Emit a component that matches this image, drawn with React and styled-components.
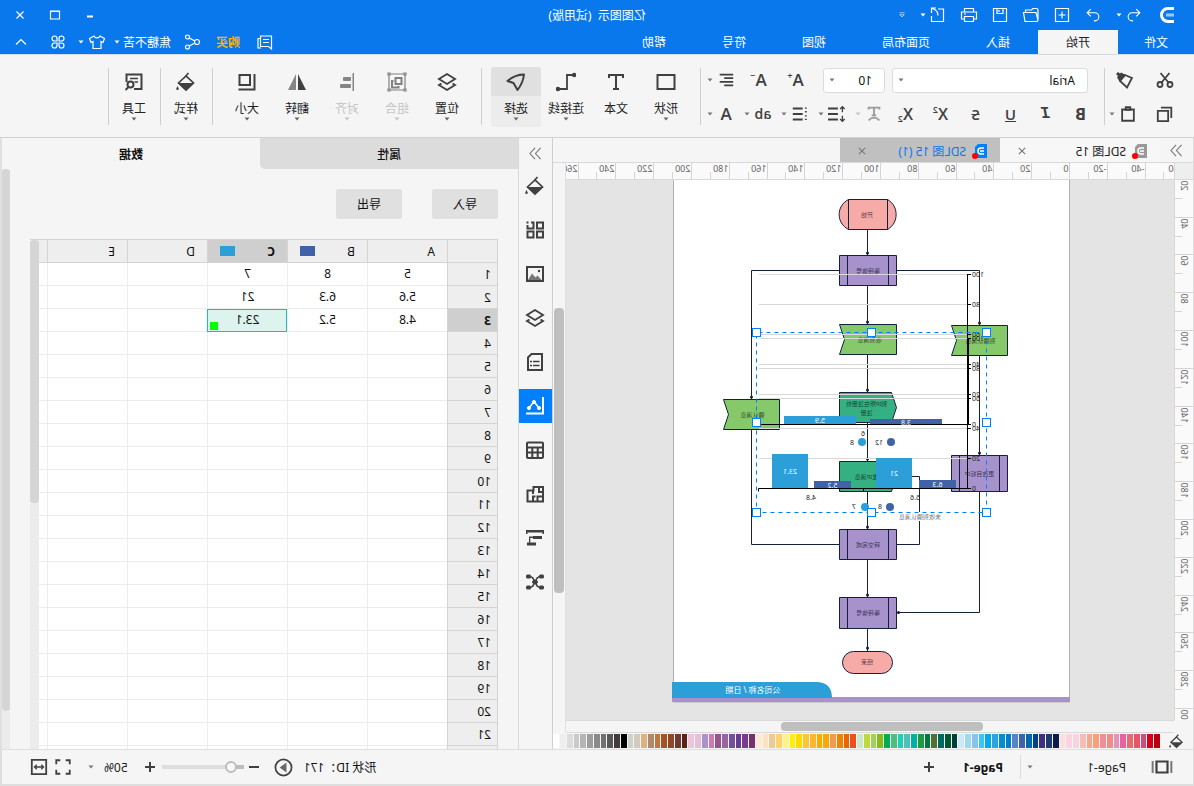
import React from "react";
import styled, { createGlobalStyle, css } from "styled-components";

const GlobalStyle = createGlobalStyle`
  * { box-sizing: border-box; }
  body {
    margin: 0;
    background: #f5f5f5;
    font-family: "Noto Sans", "Noto Sans CJK SC", sans-serif;
    font-size: 12px;
    color: #111;
  }
  button, select, input { font: inherit; color: inherit; }
`;

/* The whole window is shown flipped left to right. */
const Window = styled.div`
  height: 100vh;
  display: flex;
  flex-direction: column;
  overflow: hidden;
  background: #f5f5f5;
  transform: scaleX(-1);
`;

const Plain = styled.button`
  border: 0;
  padding: 0;
  background: none;
  display: inline-flex;
  align-items: center;
  justify-content: center;
  flex: none;
`;

/* ---------- title bar and menu ---------- */

const Header = styled.header`
  background: #0a78ed;
  color: #fff;
`;

const TitleBar = styled.div`
  height: 30px;
  display: grid;
  grid-template-columns: 1fr auto 1fr;
  align-items: center;
`;

const QuickTools = styled.div`
  display: flex;
  align-items: center;
  gap: 11px;
  padding-left: 19px;
`;

const Logo = styled.div`
  display: flex;
  margin-right: 4px;
`;

const QuickPair = styled.div`
  display: flex;
`;

const QuickButton = styled(Plain)`
  width: ${(p) => (p.$narrow ? "10px" : "20px")};
  height: 20px;
`;

const WindowTitle = styled.h1`
  margin: 0;
  font-size: 12px;
  font-weight: 400;
  white-space: pre;
`;

const WindowButtons = styled.div`
  display: flex;
  justify-content: flex-end;
  padding-right: 3px;
`;

const WindowButton = styled(Plain)`
  width: 35px;
  height: 28px;
`;

const MenuBar = styled.nav`
  display: flex;
  height: 24px;
`;

const MenuTab = styled(Plain)`
  padding: 0 28px;
  height: 24px;
  &:first-child { padding-left: 26px; padding-right: 26px; }
  ${(p) => p.$active && css`
    background: #f5f5f5;
    color: #222;
  `}
`;

const Account = styled.div`
  display: flex;
  margin-left: auto;
  padding-right: 4px;
`;

const AccountButton = styled(Plain)`
  min-width: ${(p) => p.$width || 0}px;
  padding-left: ${(p) => p.$pad || 0}px;
  gap: ${(p) => p.$gap || 0}px;
  color: ${(p) => (p.$accent ? "#ffb400" : "#fff")};
  font-weight: ${(p) => (p.$accent ? 700 : 400)};
`;

/* ---------- ribbon ---------- */

const Ribbon = styled.div`
  display: flex;
  align-items: flex-start;
  height: 84px;
  padding: 8px 2px 0 1px;
  border-top: 1px solid #d4dbe4;
  border-bottom: 1px solid #d2d2d2;
  color: #404040;
`;

const Divider = styled.div`
  width: 1px;
  height: 57px;
  margin-top: 5px;
  background: #cfcfcf;
  flex: none;
`;

const ClipboardGroup = styled.div`
  width: 88px;
  padding-left: 13px;
  flex: none;
`;

const FontGroup = styled.div`
  padding: 0 2px 0 6px;
  flex: none;
`;

const RibbonRow = styled.div`
  display: flex;
  align-items: center;
  height: 34px;
  gap: ${(p) => p.$gap || 0}px;
`;

const FontFields = styled.div`
  display: flex;
  gap: 7px;
  padding: 0 9px 0 10px;
`;

const SelectBox = styled.label`
  position: relative;
  display: flex;
  align-items: center;
  width: ${(p) => p.$width}px;
  height: 25px;
  svg { position: absolute; right: 6px; pointer-events: none; }
`;

const Select = styled.select`
  appearance: none;
  width: 100%;
  height: 25px;
  padding: 0 12px;
  border: 1px solid #dcdcdf;
  border-radius: 3px;
  background: #fff;
  color: #111;
`;

const SmallButton = styled(Plain)`
  width: ${(p) => p.$width || 30}px;
  height: 30px;
`;

const SplitButton = styled(Plain)`
  width: 37px;
  height: 30px;
  gap: 4px;
  padding-left: ${(p) => p.$pad || 5}px;
  justify-content: flex-start;
  color: ${(p) => (p.$faded ? "#9a9a9a" : "inherit")};
`;

const Glyph = styled.span`
  display: inline-flex;
  align-items: center;
  justify-content: center;
  min-width: 18px;
  font-family: ${(p) => p.$family || '"Open Sans", sans-serif'};
  font-size: ${(p) => p.$size || 16}px;
  font-weight: ${(p) => p.$weight || 600};
  font-style: ${(p) => (p.$italic ? "italic" : "normal")};
  line-height: 18px;
  sup, sub { font-size: 9px; line-height: 9px; }
  sup { align-self: flex-start; }
  sub { align-self: flex-end; }
`;

const ToolGroup = styled.div`
  display: flex;
  padding: 4px 9px 0;
  flex: none;
  ${(p) => p.$single && css`padding: 4px 0 0 1px;`}
`;

const ToolButton = styled(Plain)`
  flex-direction: column;
  justify-content: flex-start;
  width: 50px;
  height: 60px;
  border-radius: 3px;
  color: ${(p) => (p.$faded ? "#a0a0a0" : "#404040")};
  background: ${(p) => (p.$active ? "linear-gradient(#e0e0e0 0 29px, #ececec 29px)" : "none")};
`;

const ToolIcon = styled.span`
  display: flex;
  align-items: center;
  height: 29px;
`;

const ToolLabel = styled.span`
  margin-top: 5px;
  line-height: 16px;
  color: ${(p) => (p.$faded ? "#c4c4c4" : "#222")};
`;

/* ---------- work area ---------- */

const Main = styled.main`
  flex: 1;
  min-height: 0;
  display: flex;
  border-left: 1px solid #dcdcdc;
  border-right: 2px solid #e0e0e0;
`;

const Editor = styled.section`
  flex: 1;
  min-width: 0;
  display: flex;
  flex-direction: column;
  border-right: 1px solid #cfcfcf;
`;

const DocBar = styled.div`
  display: flex;
  height: 25px;
  border-bottom: 1px solid #d9d9d9;
`;

const CollapseButton = styled(Plain)`
  width: 33px;
  height: ${(p) => p.$height || 24}px;
  color: #777;
`;

const DocTab = styled.div`
  display: flex;
  align-items: center;
  width: 160px;
  padding: 2px 13px 0 12px;
  gap: 6px;
  background: ${(p) => (p.$active ? "#c0c0c0" : "#f7f7f7")};
  color: ${(p) => (p.$active ? "#0a78ed" : "#222")};
`;

const DocName = styled.span`
  flex: 1;
  white-space: nowrap;
`;

const DocClose = styled(Plain)`
  color: #777;
`;

const Workspace = styled.div`
  flex: 1;
  min-height: 0;
  display: grid;
  grid-template: 17px 1fr 13px / 19px 1fr 13px;
`;

const RulerCorner = styled.div`
  border-right: 1px solid #d9d9d9;
  border-bottom: 1px solid #d9d9d9;
  background: #eee;
`;

const TopRuler = styled.div`
  overflow: hidden;
  background: #fafafa;
  border-bottom: 1px solid #d9d9d9;
`;

const SideRuler = styled.div`
  overflow: hidden;
  background: #fafafa;
  border-right: 1px solid #d9d9d9;
`;

const RulerSvg = styled.svg`
  display: block;
  font-size: 9px;
  fill: #666;
`;

const Viewport = styled.div`
  overflow: hidden;
  background: #e4e4e4;
`;

const Canvas = styled.svg`
  display: block;
  font-size: 6px;
  text-anchor: middle;
`;

const VScroll = styled.div`
  grid-column: 3;
  grid-row: 1 / 4;
  padding: 145px 1px 0;
  border-left: 1px solid #e0e0e0;
`;

const HScroll = styled.div`
  grid-column: 2;
  padding: 1px 0 0 191px;
  border-top: 1px solid #dadada;
  border-bottom: 1px solid #dadada;
`;

const Thumb = styled.div`
  width: ${(p) => p.$w};
  height: ${(p) => p.$h};
  border-radius: 4px;
  background: ${(p) => p.$tone || "#bfbfbf"};
`;

const SwatchBar = styled.div`
  display: flex;
  align-items: center;
  height: 16px;
`;

const SwatchIcon = styled(Plain)`
  width: 33px;
  height: 16px;
  color: #404040;
`;

const Swatches = styled.div`
  flex: 1;
  display: flex;
  gap: 1px;
`;

const Swatch = styled.button`
  flex: 1;
  min-width: 0;
  height: 14px;
  padding: 0;
  border: 0;
  background: ${(p) => p.$color};
`;

/* ---------- side strip and data panel ---------- */

const SideStrip = styled.nav`
  width: 34px;
  border-right: 1px solid #d9d9d9;
  flex: none;
`;

const SideItems = styled.div`
  display: flex;
  flex-direction: column;
  gap: 10px;
`;

const SideButton = styled(Plain)`
  height: 34px;
  background: ${(p) => (p.$active ? "#0080ff" : "none")};
  color: ${(p) => (p.$active ? "#fff" : "#404040")};
`;

const Panel = styled.aside`
  width: 516px;
  flex: none;
  display: flex;
  flex-direction: column;
  min-height: 0;
`;

const PanelTabs = styled.div`
  display: flex;
  flex: none;
`;

const PanelTab = styled(Plain)`
  flex: 1;
  height: 31px;
  font-weight: ${(p) => (p.$active ? 700 : 500)};
  background: ${(p) => (p.$active ? "none" : "#dcdcdc")};
  border-bottom-right-radius: 5px;
  color: #111;
`;

const PanelBody = styled.div`
  flex: 1;
  min-height: 0;
  display: flex;
`;

const PanelContent = styled.div`
  flex: 1;
  min-width: 0;
  display: flex;
  flex-direction: column;
  padding: 20px 20px 0;
`;

const PanelButtons = styled.div`
  display: flex;
  gap: 30px;
  margin-bottom: 20px;
`;

const PanelButton = styled(Plain)`
  width: 66px;
  height: 30px;
  border-radius: 3px;
  background: #e0e0e0;
`;

const ScrollTrack = styled.div`
  width: ${(p) => p.$w}px;
  flex: none;
  background: #ececec;
`;

const SheetFrame = styled.div`
  flex: 1;
  min-height: 0;
  display: flex;
  overflow: hidden;
  border: 1px solid #d4d4d4;
  border-width: 1px 0 0 1px;
`;

const Sheet = styled.table`
  flex: 1;
  display: block;
  border-collapse: separate;
  border-spacing: 0;
  overflow: hidden;
  table-layout: fixed;
  background: #fff;
`;

const ColHead = styled.th`
  width: ${(p) => p.$w || 80}px;
  min-width: ${(p) => p.$w || 80}px;
  height: 23px;
  padding: 0;
  border-right: 1px solid #d4d4d4;
  border-bottom: 1px solid #d4d4d4;
  background: ${(p) => (p.$current ? "#cfcfcf" : "#eee")};
  font-weight: ${(p) => (p.$current ? 700 : 400)};
`;

const ColHeadInner = styled.div`
  display: flex;
  align-items: center;
  justify-content: space-between;
  padding: 0 12px;
`;

const SeriesColor = styled.span`
  width: 15px;
  height: 10px;
  background: ${(p) => p.$color};
`;

const RowHead = styled.th`
  height: 23px;
  padding: 0 0 0 6px;
  text-align: left;
  border-right: 1px solid #d4d4d4;
  border-bottom: 1px solid #d4d4d4;
  background: ${(p) => (p.$current ? "#cfcfcf" : "#eee")};
  font-weight: ${(p) => (p.$current ? 700 : 400)};
`;

const Cell = styled.td`
  position: relative;
  height: 23px;
  padding: 0;
  line-height: 16px;
  text-align: center;
  border-right: 1px solid #ececec;
  border-bottom: 1px solid #ececec;
  ${(p) => p.$current && css`
    background: #ddf3ee;
    outline: 1px solid #1fbbc0;
    outline-offset: -1px;
  `}
`;

const FillHandle = styled.span`
  position: absolute;
  right: 2px;
  bottom: 1px;
  width: 8px;
  height: 8px;
  background: #00ff00;
`;

/* ---------- status bar ---------- */

const StatusBar = styled.footer`
  display: flex;
  align-items: center;
  height: 37px;
  padding: 0 25px 0 19px;
  border: solid #dedede;
  border-width: 1px 2px 2px 1px;
  color: #404040;
  flex: none;
`;

const PagePick = styled.label`
  position: relative;
  display: flex;
  align-items: center;
  width: 106px;
  height: 24px;
  margin: 0 17px 0 24px;
  border-right: 1px solid #dcdcdc;
  svg { position: absolute; right: 6px; pointer-events: none; }
`;

const PageSelect = styled.select`
  appearance: none;
  border: 0;
  padding: 0;
  width: 100%;
  background: none;
  color: #222;
`;

const PageTab = styled(Plain)`
  font-weight: 700;
  color: #111;
  margin-right: 24px;
`;

const StatusInfo = styled.span`
  margin-left: auto;
  color: #111;
`;

const StatusButton = styled(Plain)`
  width: ${(p) => p.$w || 24}px;
  height: 24px;
`;

const ZoomSlider = styled.input`
  appearance: none;
  width: 82px;
  height: 16px;
  margin: 0;
  background: linear-gradient(90deg, #bdbdbd 0 13px, #dedede 13px) center / 100% 4px no-repeat;
  &::-webkit-slider-thumb {
    appearance: none;
    width: 12px;
    height: 12px;
    border: 2px solid #bdbdbd;
    border-radius: 50%;
    background: #f8f8f8;
  }
`;

const ZoomPick = styled(Plain)`
  gap: 10px;
  padding-left: 10px;
  margin-right: 13px;
  color: #222;
`;

/* ---------- icons ---------- */

const Caret = ({ color = "currentColor" }) => (
  <svg width="6" height="4" viewBox="0 0 6 4" aria-hidden="true"><path d="M0.5 0.5h5L3 3.5z" fill={color} /></svg>
);

const ICONS = {
  undo: <path d="M7.500 3.500L3.500 7.500l4 4M3.500 7.500h8.500a4.500 4.500 0 0 1 0 9H11" />,
  redo: <path d="M12.500 3.500l4 4-4 4M16.500 7.500H8a4.500 4.500 0 0 0 0 9h1" />,
  add: <path d="M3.500 3.500h13v13h-13zM10 6.500v7M6.500 10h7" />,
  folder: <path d="M3 15.500V5a1.500 1.500 0 0 1 1.500-1.500H8l1.500 1.500h6v2.500M5 7.500h12.500l-1.500 9H4.500a1.500 1.500 0 0 1-1.500-1.500z" />,
  save: <path d="M3.500 3.500h13v13h-13zM7 3.500v5h6v-5M11 5v2" />,
  print: <path d="M5.500 7V3.500h9V7M5 14H2.500V7h15v7H15M5.500 11.500h9v5h-9zM13 9h2" />,
  exportFile: <path d="M10 4H4.500v12.500h12V11M12 3h4.500v5M16 3.500c-4 1-6 4-6 7" />,
  message: <path d="M3.500 4h11v10.500h-8L3.500 17zM14.500 6.500h2.500V16h-3M6 7.500h6M6 10.500h6" />,
  share: <g><circle cx="5" cy="10" r="2.500" /><circle cx="14.500" cy="5" r="2" /><circle cx="14.500" cy="15" r="2" /><path d="M7.200 9L12.700 6M7.200 11l5.500 3" /></g>,
  shirt: <path d="M7 4l-4.500 2.500 1.500 4 2-1V16.500h8V9.500l2 1 1.500-4L13 4c-1 2.500-5 2.500-6 0z" />,
  apps: <path d="M9 9H6.500A2.500 2.500 0 1 1 9 6.500zM11 9h2.500A2.500 2.500 0 1 0 11 6.500zM9 11H6.500A2.500 2.500 0 1 0 9 13.500zM11 11h2.500A2.500 2.500 0 1 1 11 13.500z" />,
  chevronUp: <path d="M5 12.500L10 7.500l5 5" />,
  minimize: <path d="M7 11.500h6" strokeWidth="2" />,
  maximize: <path d="M5.500 6h9v8h-9zM5.500 6.500h9" />,
  close: <path d="M6.500 6.500l7 7M13.500 6.500l-7 7" />,
  scissors: <g strokeWidth="1.800"><circle cx="5" cy="14.500" r="2.500" /><circle cx="15" cy="14.500" r="2.500" /><path d="M6.500 12.500L14.500 3M13.500 12.500L5.500 3" /></g>,
  brush: <g><path d="M3 8L10 5l5 6-7 6.500z" strokeWidth="1.800" /><path d="M9 5l5-2.500 1 1L17 2l2 2-2 2 1 1.500-3 4.500z" fill="currentColor" stroke="none" /></g>,
  copy: <path d="M3 14.500V3h11.500M6.500 6.500H18V18H6.500z" strokeWidth="2" />,
  paste: <g strokeWidth="2"><path d="M3.500 5h13v12.500h-13z" /><path d="M7.500 2.500h5v3h-5z" /></g>,
  alignText: <path d="M2 4h15M2 8h10M2 12h15M2 16h10" strokeWidth="2" />,
  clearFormat: <path d="M4 5V3h12v2M10 3v8.500M7.500 11.500h5M4 17q6-6 12 0" strokeWidth="2" />,
  lineSpacing: <g strokeWidth="2.200"><path d="M9 4h11M9 10h11M9 16h11" /><path d="M4 2v6M1.500 4.500L4 2l2.500 2.500M4 12v6M1.500 15.500L4 18l2.500-2.500" strokeWidth="1.500" /></g>,
  bullets: <g strokeWidth="2.200"><path d="M7 4h11M7 10h11M7 16h11" /><path d="M2.500 3.500h2M2.500 7.500h2M2.500 12h2M2.500 16h2" strokeWidth="1.500" /></g>,
  rect: <path d="M1.500 3h17v14h-17z" strokeWidth="2" />,
  text: <path d="M3 6V3h14v3M10 3v14M7 17h6" strokeWidth="2" />,
  connector: <g strokeWidth="1.800"><path d="M2 3h7v14h8" /><circle cx="1.800" cy="3" r="1.300" fill="currentColor" /><circle cx="18" cy="17" r="1.300" fill="currentColor" /></g>,
  select: <path d="M2 2.500Q11 2.500 18.500 9L12.500 11 8.500 18Q3 11 2 2.500z" strokeWidth="2" strokeLinejoin="round" />,
  layers: <g strokeWidth="1.900"><path d="M10 2l8 5-8 5-8-5z" /><path d="M4.500 11.500L2 13l8 5 8-5-2.500-1.500" /></g>,
  group: <g stroke="#808080"><path d="M2 2h16v16H2z" /><path d="M1 1h2v2H1zM17 1h2v2h-2zM1 17h2v2H1zM17 17h2v2h-2z" fill="#f5f5f5" /><path d="M5.500 6h6v6h-6zM13.500 9h1.500v6.500H8.500V14" strokeWidth="2" /></g>,
  alignObjects: <g stroke="none" fill="#858585"><path d="M3 1h1.500v18H3z" /><rect x="6" y="5" width="8" height="4" rx="1" /><rect x="6" y="12" width="11" height="4" rx="1" /></g>,
  flip: <g stroke="none"><path d="M9 2v16H1z" fill="currentColor" /><path d="M11 2v16h8z" fill="#858585" /></g>,
  size: <g strokeWidth="2"><path d="M7 3h10.500v10H7z" /><path d="M2.500 2v15.500H18.500" /></g>,
  bucket: <g strokeWidth="1.700"><path d="M10 4l7.500 7-7.500 7-7.500-7zM12 6L7.500 1" /><path d="M2.500 11h15L10 18z" fill="currentColor" stroke="none" /><path d="M18.500 14l1.300 2.700a1.300 1.300 0 1 1-2.600 0z" fill="currentColor" stroke="none" /></g>,
  tools: <g strokeWidth="2"><path d="M10 17H2.500V2.500h15V10" /><path d="M6 6.500h8M6 10h3.500" strokeWidth="1.500" /><circle cx="13.500" cy="12.500" r="3" /><path d="M15.500 15l3 3" /></g>,
  doubleRight: <path d="M4 3.500L10 10 4 16.500M10.500 3.500l6 6.500-6 6.500" strokeWidth="1.300" />,
  grid: <g strokeWidth="2"><path d="M2 2.500h6v6H2zM2 11.500h6v6H2zM11.500 11.500h6v6h-6z" /><path d="M14 2.500h-2.500v6h6V5M16.500 2.500h2" /></g>,
  image: <g><path d="M2 3h16v14H2z" strokeWidth="2" /><path d="M3.500 16l4-4.500 2 2 3.500-4 4 6.500z" fill="#777" stroke="none" /><circle cx="6" cy="7" r="1.200" fill="currentColor" stroke="none" /></g>,
  doc: <g strokeWidth="2"><path d="M3 2h10.500L17 5.500V18H3z" /><path d="M5.500 9.500h6.500M5.500 13.500h6.500M13 9.500h2M13 13.500h2" strokeWidth="1.600" /></g>,
  chart: <g strokeWidth="2"><path d="M2 1v16.500h17" /><path d="M6 12l5-6.500 5 6.500" strokeWidth="1.500" /><circle cx="6" cy="12" r="1.600" fill="currentColor" strokeWidth="1" /><circle cx="11" cy="6" r="1.600" fill="currentColor" strokeWidth="1" /><circle cx="16" cy="12" r="1.600" fill="currentColor" strokeWidth="1" /></g>,
  tableIcon: <g strokeWidth="2"><rect x="2" y="2.500" width="16" height="15.500" rx="1" /><path d="M2 7.500h16M2 12.500h16M7.300 7.500V18M12.700 7.500V18" /></g>,
  plan: <path d="M2 3h9.500v3.500h6v11H2zM2 8h4V3M2 12.500h5.500v5M12 7v3M9.500 12.500h2.500v5" strokeWidth="2" />,
  timeline: <g stroke="none" fill="currentColor"><path d="M1 2h18v4h-1.500V4.500h-15V6H1zM3 8h9v3H3zM9 14.500h9v3H9z" /><path d="M12 8.500h4v6.500h-1.300V10H12z" /></g>,
  mind: <g><path d="M4 4.500q5 0 5 5.500t-5 5.500M16 4.500q-5 0-5 5.500t5 5.500M7 10h6" strokeWidth="1.500" /><g stroke="none" fill="currentColor"><rect x="1" y="2.500" width="5" height="4" rx="1.500" /><rect x="14" y="2.500" width="5" height="4" rx="1.500" /><rect x="1" y="13.500" width="5" height="4" rx="1.500" /><rect x="14" y="13.500" width="5" height="4" rx="1.500" /><circle cx="10" cy="10" r="2.500" /></g></g>,
  pages: <g><path d="M5 5h10v10H5z" strokeWidth="2" /><path d="M1.500 4.500v11M18.500 4.500v11" strokeWidth="1.800" stroke="#777" /></g>,
  plus: <path d="M10 5v10M5 10h10" strokeWidth="2" />,
  minus: <path d="M5 10h10" strokeWidth="2" />,
  play: <g><circle cx="10" cy="10" r="8.500" strokeWidth="1.800" /><path d="M7.500 6L13 10l-5.500 4z" fill="#666" stroke="#666" /></g>,
  fullscreen: <path d="M2.500 7V2.500H7M13 2.500h4.500V7M17.500 13v4.500H13M7 17.500H2.500V13" strokeWidth="2" />,
  fit: <g><path d="M2 2h16v16H2z" strokeWidth="2" /><path d="M5 10h10M7.500 7.500L5 10l2.500 2.500M12.500 7.500L15 10l-2.500 2.500" strokeWidth="1.500" /></g>,
  overflow: <path d="M5 5.500h10M5.500 9.500h9L10 14z" />,
};

const Icon = ({ name, size = 20 }) => (
  <svg width={size} height={size} viewBox="0 0 20 20" fill="none" stroke="currentColor" strokeWidth="1.200" aria-hidden="true">
    {ICONS[name]}
  </svg>
);

const DocIcon = ({ color }) => (
  <svg width="16" height="16" viewBox="0 0 16 16" aria-hidden="true">
    <path d="M1 1h9l3 3v11H1z" fill={color} />
    <path d="M4 5h3a3 3 0 0 1 0 6H4M4 8h4" fill="none" stroke="#fff" strokeWidth="1.500" />
    <circle cx="13" cy="13" r="3" fill="#f00" />
  </svg>
);

/* ---------- data ---------- */

const SWATCHES = (
  "b7000f d9001b c94f7c e85568 e96a6f e662a0 e294bb ee8e85 ef8f9a ff9d76 f3a98f f6bdb9 f7d5df fbd3e3 fbdde2 " +
  "0b1c4b 1f3973 40307c 00438a 0068ac 4062a8 5783c7 007fcc 008fd3 2ea3dd 00aaef 3ac5f5 8bc2eb 9fd9ee cde8f6 " +
  "003f36 00592e 00695f 4f7032 007943 1e9a3f 00b3a0 4fc0b6 1fcfb3 4abf7f 00ae4d 86bc14 a2cf62 bed93c cde8c8 " +
  "e94f1f ee6600 f08300 f39950 fca800 ffaa00 fdb631 fbc72e ffd900 ffef00 fff388 ffd26b eccb95 fde2c2 fee9d5 " +
  "79306f 7b3a8f 653e93 764f9a 9865a3 95548a cc7ab1 a992ce e9bed9 eec6dc " +
  "5b2317 6f3a2f 90482a a8521f bf7840 b18a6d dcb283 d2cac2 cbd3cb " +
  "000000 403c3b 595959 727272 8a8a8a 9e9e9e b5b5b5 cacaca dcdcdc eeeeee ffffff"
).split(" ");

const MENU = ["文件", "开始", "插入", "页面布局", "视图", "符号", "帮助"];

const COLUMNS = [
  { name: "A" },
  { name: "B", color: "#4062a8" },
  { name: "C", color: "#2d9fd8", current: true },
  { name: "D" },
  { name: "E" },
];

const VALUES = [["5", "8", "7"], ["5.6", "6.3", "21"], ["4.8", "5.2", "23.1"]];

const SIDE_ITEMS = ["bucket", "grid", "image", "layers", "doc", "chart", "tableIcon", "plan", "timeline", "mind"];

/* ---------- rulers ---------- */

const UNIT = 1.89;

const range = (from, to, step) => {
  const out = [];
  for (let v = from; v <= to; v += step) out.push(v);
  return out;
};

const HorizontalRuler = () => (
  <RulerSvg width="1400" height="16" aria-hidden="true">
    {range(-60, 660, 10).map((v) => {
      const x = Math.round(105 + v * UNIT) - 0.5;
      const major = v % 20 === 0;
      return (
        <g key={v}>
          <path d={`M${x} ${major ? 0 : 9}V16`} stroke="#d4d4d4" />
          {major && <text x={x + 1} y="9">{v}</text>}
        </g>
      );
    })}
  </RulerSvg>
);

const VerticalRuler = () => (
  <RulerSvg width="18" height="1200" aria-hidden="true">
    {range(10, 640, 10).map((v) => {
      const y = Math.round(v * UNIT - 39) + 0.5;
      const major = v % 20 === 0;
      return (
        <g key={v}>
          <path d={`M${major ? 0 : 11} ${y}H18`} stroke="#d4d4d4" />
          {major && <text transform={`translate(12 ${y + 1}) rotate(-90)`} textAnchor="end">{v}</text>}
        </g>
      );
    })}
  </RulerSvg>
);

/* ---------- diagram ---------- */

const INK = "#14213d";

const Process = ({ x, y, w = 57, h = 30, label }) => (
  <g>
    <path d={`M${x} ${y}h${w}v${h}h${-w}zM${x + 8} ${y}v${h}M${x + w - 8} ${y}v${h}`} fill="#a892cc" stroke={INK} />
    <text x={x + w / 2} y={y + h / 2 + 2} fill="#3d3457">{label}</text>
  </g>
);

const Receive = ({ x, y, w = 57, label }) => (
  <g>
    <path d={`M${x} ${y}h${w}l-5 15 5 15h${-w}z`} fill="#86c96b" stroke={INK} />
    <text x={x + 27} y={y + 17} fill="#35532a">{label}</text>
  </g>
);

const Send = ({ x, y, label, second }) => (
  <g>
    <path d={`M${x + 5} ${y}h52v30h-52l-5-15z`} fill="#35b083" stroke={INK} />
    <text x={x + 30} y={y + (second ? 13 : 17)} fill="#124634">{label}</text>
    {second && <text x={x + 30} y={y + 22} fill="#124634">{second}</text>}
  </g>
);

const Link = ({ d, dot }) => (
  <g>
    <path d={d} fill="none" stroke={INK} />
    {dot && <circle cx={dot[0]} cy={dot[1]} r="1.500" fill={INK} />}
  </g>
);

const Bar = ({ x, y, w, base, color, label }) => (
  <g>
    <rect x={x} y={y} width={w} height={base - y} fill={color} />
    <text x={x + w / 2} y={(y + base) / 2 + 3} fill="#fff">{label}</text>
  </g>
);

const LIGHT = "#2d9fd8";
const DARK = "#4062a8";

const ChartScale = ({ top }) => (
  <g>
    {[100, 80, 60, 40, 20, 0].map((v, i) => (
      <g key={v}>
        <path d={`M226 ${top + i * 30 + 0.5}H435`} stroke={v ? "#d8d8d8" : "#000"} />
        <path d={`M223 ${top + i * 30 + 0.5}h3`} stroke="#000" />
        <text x="222" y={top + i * 30 + 3} textAnchor="end" fill="#222">{v}</text>
      </g>
    ))}
    <path d={`M226.500 ${top}v151`} stroke="#000" />
  </g>
);

const Diagram = () => (
  <Canvas width="609" height="540" viewBox="20 180 609 540" role="img" aria-label="SDL图">
    <path d="M124.500 100V702H520.500V100z" fill="#fff" stroke="#b0b0b0" />
    <rect x="124" y="697" width="398" height="5" fill="#a892cc" />
    <path d="M362 698q0-16 16-16h144v16z" fill={LIGHT} />
    <text x="441" y="693" fontSize="8" fill="#fff">公司名称 / 日期</text>

    <Link d="M326.500 229V255" dot={[326.500, 253]} />
    <Link d="M326.500 286V324" dot={[326.500, 322]} />
    <Link d="M326.500 354V392" dot={[326.500, 390]} />
    <Link d="M326.500 422V461" dot={[326.500, 459]} />
    <Link d="M326.500 491V529" dot={[326.500, 527]} />
    <Link d="M326.500 559V597" dot={[326.500, 595]} />
    <Link d="M326.500 628V651" dot={[326.500, 648]} />
    <Link d="M297 270.500H214.500V325" dot={[214.500, 323]} />
    <Link d="M355 270.500H442.500V399" dot={[442.500, 397]} />
    <Link d="M214.500 355V455" dot={[214.500, 453]} />
    <Link d="M214.500 491V612.500H297" dot={[295.500, 612.500]} />
    <Link d="M442.500 430V544.500H355" dot={[353, 544.500]} />
    <Link d="M282 476.500H274.500V512M274.500 521V544.500H297" />

    <path d="M306.500 199.500H345.500C358 206 358 223 345.500 229.500H306.500C295 223 295 206 306.500 199.500zM306.500 199.500v30M345.500 199.500v30" fill="#f6aba9" stroke={INK} />
    <text x="327" y="217" fill="#6b3f45">开始</text>
    <Process x={297.500} y={255.500} label="等待信号" />
    <Receive x={297.500} y={324.500} label="收到消息" />
    <Receive x={186.500} y={325.500} w={56} label="到确认消息" />
    <Send x={297.500} y={392.500} label="到IP所在注册处" second="注册" />
    <Receive x={414.500} y={399.500} w={56} label="确认消息" />
    <Send x={297.500} y={461.500} label="发IP消息" />
    <Process x={186.500} y={455.500} w={56} h={36} label="更改目标IP" />
    <Process x={297.500} y={529.500} label="转交完成" />
    <Process x={297.500} y={597.500} h={31} label="等待信号" />
    <rect x="301.500" y="651.500" width="50" height="22" rx="11" fill="#f6aba9" stroke={INK} />
    <text x="327" y="664" fill="#6b3f45">结束</text>
    <text x="274" y="519" fill="#777">未收到确认消息</text>

    <g fontSize="7">
      <ChartScale top={274} />
      <ChartScale top={338} />
      <path d="M226 338v86" stroke="#000" strokeWidth="2" />
      <Bar x={338} y={416} w={72} base={424} color={LIGHT} label="5.9" />
      <Bar x={252} y={419} w={72} base={424} color={DARK} label="3.8" />
      <Bar x={386} y={454} w={36} base={488} color={LIGHT} label="23.1" />
      <Bar x={282} y={458} w={36} base={488} color={LIGHT} label="21" />
      <Bar x={343} y={481} w={37} base={488} color={DARK} label="5.2" />
      <Bar x={238} y={480} w={37} base={488} color={DARK} label="6.3" />
      <path d="M226 488.500H435.500v3M330.500 488v3" fill="none" stroke="#000" />
      <g fill="#222">
        <text x="331" y="436">6</text>
        <text x="315" y="445">12</text>
        <text x="342" y="445">8</text>
        <text x="279" y="500">5.6</text>
        <text x="383" y="500">4.8</text>
        <text x="314" y="509">8</text>
        <text x="340" y="509">7</text>
      </g>
      <circle cx="303" cy="442" r="4" fill={DARK} />
      <circle cx="332" cy="442" r="4" fill={LIGHT} />
      <circle cx="304" cy="507" r="4" fill={DARK} />
      <circle cx="329" cy="507" r="4" fill={LIGHT} />
    </g>

    <rect x="207.500" y="332.500" width="230" height="180" fill="none" stroke="#0080ff" strokeDasharray="4 4" />
    {[[207, 332], [322, 332], [437, 332], [207, 422], [437, 422], [207, 512], [322, 512], [437, 512]].map(([x, y]) => (
      <rect key={`${x}-${y}`} x={x - 3.500} y={y - 3.500} width="8" height="8" fill="#fff" stroke="#0080ff" />
    ))}
  </Canvas>
);

/* ---------- pieces ---------- */

const Tool = ({ icon, label, menu = true, faded, active }) => (
  <ToolButton $faded={faded} $active={active} disabled={faded}>
    <ToolIcon><Icon name={icon} /></ToolIcon>
    <ToolLabel $faded={faded}>{label}</ToolLabel>
    {menu && <Caret color={faded ? "#c4c4c4" : "#666"} />}
  </ToolButton>
);

const Split = ({ label, faded, children }) => (
  <SplitButton aria-label={label} $faded={faded}>
    {children}
    <Caret color={faded ? "#c4c4c4" : "#777"} />
  </SplitButton>
);

const DataSheet = () => (
  <SheetFrame>
    <Sheet>
      <thead>
        <tr>
          <ColHead $w={50} />
          {COLUMNS.map((c) => (
            <ColHead key={c.name} $current={c.current} scope="col">
              <ColHeadInner>
                {c.name}
                {c.color && <SeriesColor $color={c.color} />}
              </ColHeadInner>
            </ColHead>
          ))}
          <ColHead />
        </tr>
      </thead>
      <tbody>
        {range(1, 22, 1).map((n) => (
          <tr key={n}>
            <RowHead scope="row" $current={n === 3}>{n}</RowHead>
            {range(0, 5, 1).map((c) => {
              const current = n === 3 && c === 2;
              return (
                <Cell key={c} $current={current}>
                  {VALUES[n - 1] && VALUES[n - 1][c]}
                  {current && <FillHandle />}
                </Cell>
              );
            })}
          </tr>
        ))}
      </tbody>
    </Sheet>
    <ScrollTrack $w={9}><Thumb $w="9px" $h="263px" $tone="#d5d5d5" /></ScrollTrack>
  </SheetFrame>
);

export default function App() {
  return (
    <Window>
      <GlobalStyle />
      <Header>
        <TitleBar>
          <QuickTools>
            <Logo>
              <svg width="16" height="18" viewBox="0 0 16 18" aria-hidden="true">
                <path d="M1 2.500h6a6.500 6.500 0 0 1 0 13H1" fill="none" stroke="#fff" strokeWidth="3" />
                <path d="M1 9h8" stroke="#9cc9f8" strokeWidth="3" />
              </svg>
            </Logo>
            <QuickPair>
              <QuickButton aria-label="撤销"><Icon name="undo" size={18} /></QuickButton>
              <QuickButton $narrow aria-label="撤销列表"><Caret /></QuickButton>
            </QuickPair>
            <QuickButton aria-label="恢复"><Icon name="redo" size={18} /></QuickButton>
            <QuickButton aria-label="新建"><Icon name="add" /></QuickButton>
            <QuickButton aria-label="打开"><Icon name="folder" /></QuickButton>
            <QuickButton aria-label="保存"><Icon name="save" /></QuickButton>
            <QuickButton aria-label="打印"><Icon name="print" /></QuickButton>
            <QuickPair>
              <QuickButton aria-label="导出文件"><Icon name="exportFile" /></QuickButton>
              <QuickButton $narrow aria-label="导出选项"><Caret /></QuickButton>
            </QuickPair>
            <QuickButton $narrow aria-label="更多"><Icon name="overflow" size={16} /></QuickButton>
          </QuickTools>
          <WindowTitle>{"亿图图示  (试用版)"}</WindowTitle>
          <WindowButtons>
            <WindowButton aria-label="最小化"><Icon name="minimize" /></WindowButton>
            <WindowButton aria-label="最大化"><Icon name="maximize" /></WindowButton>
            <WindowButton aria-label="关闭"><Icon name="close" /></WindowButton>
          </WindowButtons>
        </TitleBar>
        <MenuBar>
          {MENU.map((m) => <MenuTab key={m} $active={m === "开始"}>{m}</MenuTab>)}
          <Account>
            <AccountButton $width={34} aria-label="消息"><Icon name="message" /></AccountButton>
            <AccountButton $width={40} $accent>购买</AccountButton>
            <AccountButton $width={32} aria-label="分享"><Icon name="share" /></AccountButton>
            <AccountButton $pad={5} $gap={3}>焦糖不苦<Caret /></AccountButton>
            <AccountButton $pad={7} $gap={3} aria-label="主题"><Icon name="shirt" /><Caret /></AccountButton>
            <AccountButton $width={40} aria-label="应用"><Icon name="apps" /></AccountButton>
            <AccountButton $width={34} aria-label="收起功能区"><Icon name="chevronUp" /></AccountButton>
          </Account>
        </MenuBar>
      </Header>

      <Ribbon>
        <ClipboardGroup>
          <RibbonRow $gap={10}>
            <SmallButton aria-label="剪切"><Icon name="scissors" /></SmallButton>
            <SmallButton aria-label="格式刷"><Icon name="brush" /></SmallButton>
          </RibbonRow>
          <RibbonRow $gap={10}>
            <SmallButton aria-label="复制"><Icon name="copy" size={18} /></SmallButton>
            <SplitButton $pad={3} aria-label="粘贴"><Icon name="paste" size={18} /><Caret color="#777" /></SplitButton>
          </RibbonRow>
        </ClipboardGroup>
        <Divider />
        <FontGroup>
          <RibbonRow>
            <FontFields>
              <SelectBox $width={196}>
                <Select aria-label="字体" defaultValue="Arial"><option>Arial</option></Select>
                <Caret color="#777" />
              </SelectBox>
              <SelectBox $width={62}>
                <Select aria-label="字号" defaultValue="10"><option>10</option></Select>
                <Caret color="#777" />
              </SelectBox>
            </FontFields>
            <SmallButton $width={37} aria-label="增大字号"><Glyph $size={17}>A<sup>+</sup></Glyph></SmallButton>
            <SmallButton $width={37} aria-label="减小字号"><Glyph $size={17}>A<sup>−</sup></Glyph></SmallButton>
            <Split label="对齐方式"><Icon name="alignText" size={18} /></Split>
          </RibbonRow>
          <RibbonRow>
            <SmallButton $width={35} aria-label="加粗"><Glyph $weight={700}>B</Glyph></SmallButton>
            <SmallButton $width={35} aria-label="斜体"><Glyph $italic $weight={700} $family='"Liberation Mono", monospace'>I</Glyph></SmallButton>
            <SmallButton $width={35} aria-label="下划线"><Glyph $size={15}><u>U</u></Glyph></SmallButton>
            <SmallButton $width={35} aria-label="删除线"><Glyph $size={15}><s>S</s></Glyph></SmallButton>
            <SmallButton $width={35} aria-label="上标"><Glyph>X<sup>2</sup></Glyph></SmallButton>
            <SmallButton $width={35} aria-label="下标"><Glyph>X<sub>2</sub></Glyph></SmallButton>
            <Split label="清除格式" faded><Icon name="clearFormat" size={18} /></Split>
            <Split label="行距"><Icon name="lineSpacing" size={18} /></Split>
            <Split label="项目符号"><Icon name="bullets" size={18} /></Split>
            <Split label="大小写"><Glyph $size={14}>ab</Glyph></Split>
            <Split label="字体颜色"><Glyph $size={17}>A</Glyph></Split>
          </RibbonRow>
        </FontGroup>
        <Divider />
        <ToolGroup>
          <Tool icon="rect" label="形状" />
          <Tool icon="text" label="文本" menu={false} />
          <Tool icon="connector" label="连接线" />
          <Tool icon="select" label="选择" active />
        </ToolGroup>
        <Divider />
        <ToolGroup>
          <Tool icon="layers" label="位置" />
          <Tool icon="group" label="组合" faded />
          <Tool icon="alignObjects" label="对齐" faded />
          <Tool icon="flip" label="翻转" />
          <Tool icon="size" label="大小" />
        </ToolGroup>
        <Divider />
        <ToolGroup $single><Tool icon="bucket" label="样式" /></ToolGroup>
        <Divider />
        <ToolGroup $single><Tool icon="tools" label="工具" /></ToolGroup>
        <Divider />
      </Ribbon>

      <Main>
        <Editor>
          <DocBar>
            <CollapseButton aria-label="展开符号库"><Icon name="doubleRight" size={17} /></CollapseButton>
            <DocTab>
              <DocIcon color="#999" />
              <DocName>SDL图 15</DocName>
              <DocClose aria-label="关闭 SDL图 15"><Icon name="close" size={18} /></DocClose>
            </DocTab>
            <DocTab $active>
              <DocIcon color="#0080ff" />
              <DocName>SDL图 15 (1)</DocName>
              <DocClose aria-label="关闭 SDL图 15 (1)"><Icon name="close" size={18} /></DocClose>
            </DocTab>
          </DocBar>
          <Workspace>
            <RulerCorner />
            <TopRuler><HorizontalRuler /></TopRuler>
            <VScroll><Thumb $w="10px" $h="285px" /></VScroll>
            <SideRuler><VerticalRuler /></SideRuler>
            <Viewport><Diagram /></Viewport>
            <HScroll><Thumb $w="202px" $h="9px" /></HScroll>
          </Workspace>
          <SwatchBar>
            <SwatchIcon aria-label="填充颜色"><Icon name="bucket" size={15} /></SwatchIcon>
            <Swatches>
              {SWATCHES.map((c) => <Swatch key={c} $color={`#${c}`} aria-label={`#${c}`} />)}
            </Swatches>
          </SwatchBar>
        </Editor>
        <SideStrip>
          <CollapseButton $height={31} aria-label="收起面板"><Icon name="doubleRight" size={17} /></CollapseButton>
          <SideItems>
            {SIDE_ITEMS.map((name, i) => (
              <SideButton key={name} $active={name === "chart"} aria-label={`面板 ${i + 1}`}>
                <Icon name={name} />
              </SideButton>
            ))}
          </SideItems>
        </SideStrip>
        <Panel>
          <PanelTabs>
            <PanelTab>属性</PanelTab>
            <PanelTab $active>数据</PanelTab>
          </PanelTabs>
          <PanelBody>
            <PanelContent>
              <PanelButtons>
                <PanelButton>导入</PanelButton>
                <PanelButton>导出</PanelButton>
              </PanelButtons>
              <DataSheet />
            </PanelContent>
            <ScrollTrack $w={8}><Thumb $w="8px" $h="542px" $tone="#d5d5d5" /></ScrollTrack>
          </PanelBody>
        </Panel>
      </Main>

      <StatusBar>
        <StatusButton aria-label="页面列表"><Icon name="pages" size={22} /></StatusButton>
        <PagePick>
          <PageSelect aria-label="页面" defaultValue="Page-1"><option>Page-1</option></PageSelect>
          <Caret color="#777" />
        </PagePick>
        <PageTab>Page-1</PageTab>
        <StatusButton $w={20} aria-label="新建页面"><Icon name="plus" /></StatusButton>
        <StatusInfo>形状 ID：171</StatusInfo>
        <StatusButton $w={40} aria-label="播放"><Icon name="play" size={19} /></StatusButton>
        <StatusButton $w={20} aria-label="缩小"><Icon name="minus" /></StatusButton>
        <ZoomSlider type="range" min="0" max="100" defaultValue="10" aria-label="缩放" />
        <StatusButton aria-label="放大"><Icon name="plus" /></StatusButton>
        <ZoomPick>50%<Caret color="#777" /></ZoomPick>
        <StatusButton aria-label="全屏"><Icon name="fullscreen" size={18} /></StatusButton>
        <StatusButton aria-label="适应宽度"><Icon name="fit" size={18} /></StatusButton>
      </StatusBar>
    </Window>
  );
}
